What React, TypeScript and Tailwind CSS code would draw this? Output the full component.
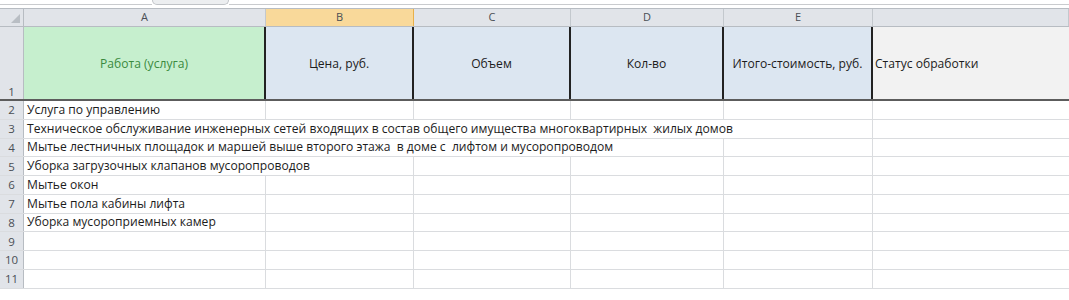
const cols = ["A", "B", "C", "D", "E", ""];
const widths = ["w-[242px]", "w-[148px]", "w-[157px]", "w-[153px]", "w-[149px]", "flex-1"];

const rows = [
  "Услуга по управлению",
  "Техническое обслуживание инженерных сетей входящих в состав общего имущества многоквартирных  жилых домов",
  "Мытье лестничных площадок и маршей выше второго этажа  в доме с  лифтом и мусоропроводом",
  "Уборка загрузочных клапанов мусоропроводов",
  "Мытье окон",
  "Мытье пола кабины лифта",
  "Уборка мусороприемных камер",
  "",
  "",
  "",
];

export default function App() {
  return (
    <div className="w-[1069px] h-[300px] bg-white overflow-hidden font-['Open_Sans',sans-serif] text-[12.1px] text-[#1c1c1c]">
      {/* sheet tab strip */}
      <div className="h-[8px] flex">
        <div className="w-[152px] border-b border-[#c9cbce] mb-[3px]" />
        <div className="w-[77px] h-[5px] bg-[#eceef0] border border-t-0 border-[#c0c3c7] rounded-b-[6px]" />
        <div className="flex-1 border-b border-[#c9cbce] mb-[3px]" />
      </div>

      {/* column headers */}
      <div className="flex h-[19px] bg-[#e1e4e9] border-y border-[#b7bcc2] text-[11px] text-[#4a4f55]">
        <div className="w-[24px] border-r border-[#b7bcc2] flex items-end justify-end pr-[3px] pb-[3px]">
          <div className="w-0 h-0 border-l-[9px] border-l-transparent border-b-[9px] border-b-[#b9bec4]" />
        </div>
        {cols.map((c, i) => (
          <div
            key={i}
            className={`${widths[i]} flex items-center justify-center border-r ${
              i === 1 ? "bg-[#f9d99a] border-[#e8b04a]" : "border-[#c3c8cd]"
            }`}
          >
            {c}
          </div>
        ))}
      </div>

      {/* row 1 - titles */}
      <div className="flex h-[74px] border-b-2 border-[#5c5c5c]">
        <div className="w-[24px] bg-[#e1e4e9] border-r border-[#b7bcc2] flex items-end justify-center text-[11.5px] leading-[15px] text-[#4a4f55]">
          1
        </div>
        <div className="w-[242px] bg-[#c6efce] border-r-2 border-[#222] flex items-center justify-center text-[#3b8a3e] pt-[2px]">
          Работа (услуга)
        </div>
        <div className="w-[148px] bg-[#dce6f1] border-r-2 border-[#222] flex items-center justify-center pt-[2px]">
          Цена, руб.
        </div>
        <div className="w-[157px] bg-[#dce6f1] border-r-2 border-[#222] flex items-center justify-center pt-[2px]">
          Объем
        </div>
        <div className="w-[153px] bg-[#dce6f1] border-r-2 border-[#222] flex items-center justify-center pt-[2px]">
          Кол-во
        </div>
        <div className="w-[149px] bg-[#dce6f1] border-r-2 border-[#222] flex items-center justify-center pt-[2px]">
          Итого-стоимость, руб.
        </div>
        <div className="flex-1 bg-[#f2f2f2] flex items-center pl-[2px] pt-[2px]">Статус обработки</div>
      </div>

      {/* data rows */}
      {rows.map((text, r) => (
        <div key={r} className="flex h-[18.75px] border-b border-[#dadcdf] relative">
          <div className="w-[24px] bg-[#e1e4e9] border-r border-[#b7bcc2] flex items-center justify-center text-[11.5px] text-[#4a4f55]">
            {r + 2}
          </div>
          {cols.map((_, i) => (
            <div key={i} className={`${widths[i]} ${i < 5 ? "border-r border-[#dadcdf]" : ""}`} />
          ))}
          {text && (
            <div className="absolute left-[27px] top-0 h-full flex items-center whitespace-pre bg-white pr-[2px]">
              {text}
            </div>
          )}
        </div>
      ))}
    </div>
  );
}
